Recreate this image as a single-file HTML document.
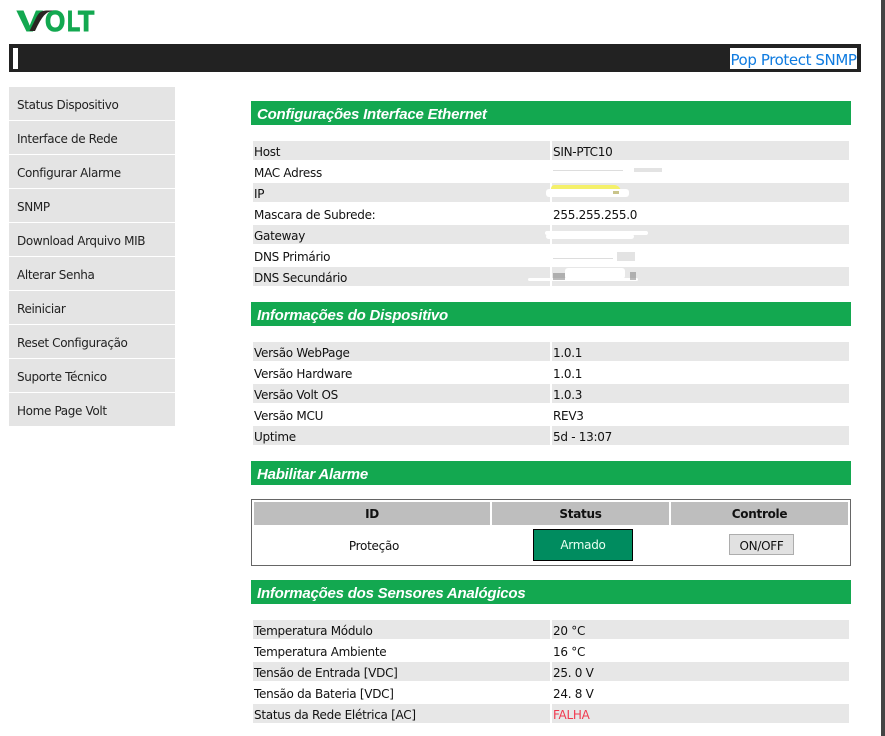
<!DOCTYPE html>
<html lang="pt"><head><meta charset="utf-8"><title>Volt</title>
<style>
html,body{margin:0;padding:0;background:#fff;width:885px;height:736px;overflow:hidden}
body{position:relative;font-family:"DejaVu Sans","Liberation Sans",sans-serif;font-size:12px;letter-spacing:-.28px;color:#111}
div{position:absolute;box-sizing:border-box;white-space:nowrap}
.m{left:9px;width:166px;height:33px;background:#e4e4e4;padding-left:8px;line-height:37px;color:#222;letter-spacing:-.36px}
.g{left:251px;width:600px;height:24px;background:#13a850;color:#fff;font-family:"Liberation Sans",sans-serif;font-weight:bold;font-style:italic;font-size:15px;letter-spacing:-.22px;line-height:27px;padding-left:6px}
.a,.b{height:19px;line-height:22px;top:0}
.a{left:253px;width:297px;padding-left:1px}
.b{left:552px;width:297px;padding-left:1px}
.s{background:#e7e7e7}
.h{top:502px;height:23px;background:#bebebe;font-weight:bold;text-align:center;line-height:24px;color:#111}
.w{background:#fff;height:5px;border-radius:3px}
</style></head><body>
<svg style="position:absolute;left:0;top:0" width="110" height="40" viewBox="0 0 110 40" font-family="Liberation Sans, sans-serif" font-weight="bold" font-size="29" fill="#13a850" stroke="#13a850" stroke-width="1">
<text x="17" y="31" textLength="25" lengthAdjust="spacingAndGlyphs">V</text>
<text x="45" y="31" textLength="20" lengthAdjust="spacingAndGlyphs">O</text>
<text x="67" y="31" textLength="13" lengthAdjust="spacingAndGlyphs">L</text>
<text x="78" y="31" textLength="16" lengthAdjust="spacingAndGlyphs">T</text>
<path d="M29.500 31 L37 16 Q40 10.500 46 10.500 L54 10.500 Q47.500 11.500 44 15.500 Q40 20 35 31 Z" fill="#2b2522" stroke="none"/>
</svg>
<div style="left:9px;top:44px;width:852px;height:28px;background:#222"></div>
<div style="left:13px;top:48px;width:5px;height:21px;background:#fff"></div>
<div style="left:730px;top:48px;width:127px;height:21px;background:#fff;color:#0f7be0;font-size:15px;line-height:24px;letter-spacing:-.4px;text-align:center">Pop Protect SNMP</div>
<div style="left:881px;top:0;width:4px;height:736px;background:#444"></div>

<div class="m" style="top:87px">Status Dispositivo</div>
<div class="m" style="top:121px">Interface de Rede</div>
<div class="m" style="top:155px">Configurar Alarme</div>
<div class="m" style="top:189px">SNMP</div>
<div class="m" style="top:223px">Download Arquivo MIB</div>
<div class="m" style="top:257px">Alterar Senha</div>
<div class="m" style="top:291px">Reiniciar</div>
<div class="m" style="top:325px">Reset Configuração</div>
<div class="m" style="top:359px">Suporte Técnico</div>
<div class="m" style="top:393px">Home Page Volt</div>

<div class="g" style="top:101px">Configurações Interface Ethernet</div>
<div class="a s" style="top:141px">Host</div><div class="b s" style="top:141px">SIN-PTC10</div>
<div class="a" style="top:162px">MAC Adress</div>
<div class="a s" style="top:183px">IP</div><div class="b s" style="top:183px"></div>
<div class="a" style="top:204px">Mascara de Subrede:</div><div class="b" style="top:204px">255.255.255.0</div>
<div class="a s" style="top:225px">Gateway</div><div class="b s" style="top:225px"></div>
<div class="a" style="top:246px">DNS Primário</div>
<div class="a s" style="top:267px">DNS Secundário</div><div class="b s" style="top:267px"></div>

<div style="left:551px;top:185px;width:70px;height:7px;background:#f4f06a;border-radius:4px 8px 0 0"></div>
<div class="w" style="left:546px;top:189px;width:83px;height:8px"></div>
<div class="w" style="left:545px;top:231px;width:103px;height:4px"></div>
<div class="w" style="left:546px;top:234px;width:88px;height:5px"></div>
<div class="w" style="left:528px;top:278px;width:110px;height:3px"></div>
<div class="w" style="left:565px;top:268px;width:60px;height:11px"></div>
<div style="left:613px;top:191px;width:6px;height:3px;background:#c9c48a"></div>
<div style="left:634px;top:168px;width:28px;height:4px;background:#ccc;opacity:.55"></div>
<div style="left:553px;top:170px;width:70px;height:1px;background:#bbb;opacity:.5"></div>
<div style="left:617px;top:252px;width:18px;height:9px;background:#ccc;opacity:.55"></div>
<div style="left:553px;top:258px;width:60px;height:1px;background:#ddd"></div>
<div style="left:553px;top:273px;width:12px;height:7px;background:#777;opacity:.5"></div>
<div style="left:630px;top:272px;width:6px;height:8px;background:#777;opacity:.5"></div>

<div class="g" style="top:302px">Informações do Dispositivo</div>
<div class="a s" style="top:342px">Versão WebPage</div><div class="b s" style="top:342px">1.0.1</div>
<div class="a" style="top:363px">Versão Hardware</div><div class="b" style="top:363px">1.0.1</div>
<div class="a s" style="top:384px">Versão Volt OS</div><div class="b s" style="top:384px">1.0.3</div>
<div class="a" style="top:405px">Versão MCU</div><div class="b" style="top:405px">REV3</div>
<div class="a s" style="top:426px">Uptime</div><div class="b s" style="top:426px">5d - 13:07</div>

<div class="g" style="top:461px">Habilitar Alarme</div>
<div style="left:251px;top:499px;width:600px;height:67px;border:1px solid #666"></div>
<div class="h" style="left:254px;width:236px">ID</div>
<div class="h" style="left:492px;width:177px">Status</div>
<div class="h" style="left:671px;width:177px">Controle</div>
<div style="left:254px;top:536px;width:240px;text-align:center;line-height:20px">Proteção</div>
<div style="left:533px;top:529px;width:100px;height:32px;background:#008c5f;border:1px solid #000;color:#e8fff2;text-align:center;line-height:30px">Armado</div>
<div style="left:729px;top:534px;width:65px;height:21px;background:#e1e1e1;border:1px solid #adadad;text-align:center;line-height:22px">ON/OFF</div>

<div class="g" style="top:580px">Informações dos Sensores Analógicos</div>
<div class="a s" style="top:620px">Temperatura Módulo</div><div class="b s" style="top:620px">20 °C</div>
<div class="a" style="top:641px">Temperatura Ambiente</div><div class="b" style="top:641px">16 °C</div>
<div class="a s" style="top:662px">Tensão de Entrada [VDC]</div><div class="b s" style="top:662px">25. 0 V</div>
<div class="a" style="top:683px">Tensão da Bateria [VDC]</div><div class="b" style="top:683px">24. 8 V</div>
<div class="a s" style="top:704px">Status da Rede Elétrica [AC]</div><div class="b s" style="top:704px;color:#f0394f">FALHA</div>
</body></html>
